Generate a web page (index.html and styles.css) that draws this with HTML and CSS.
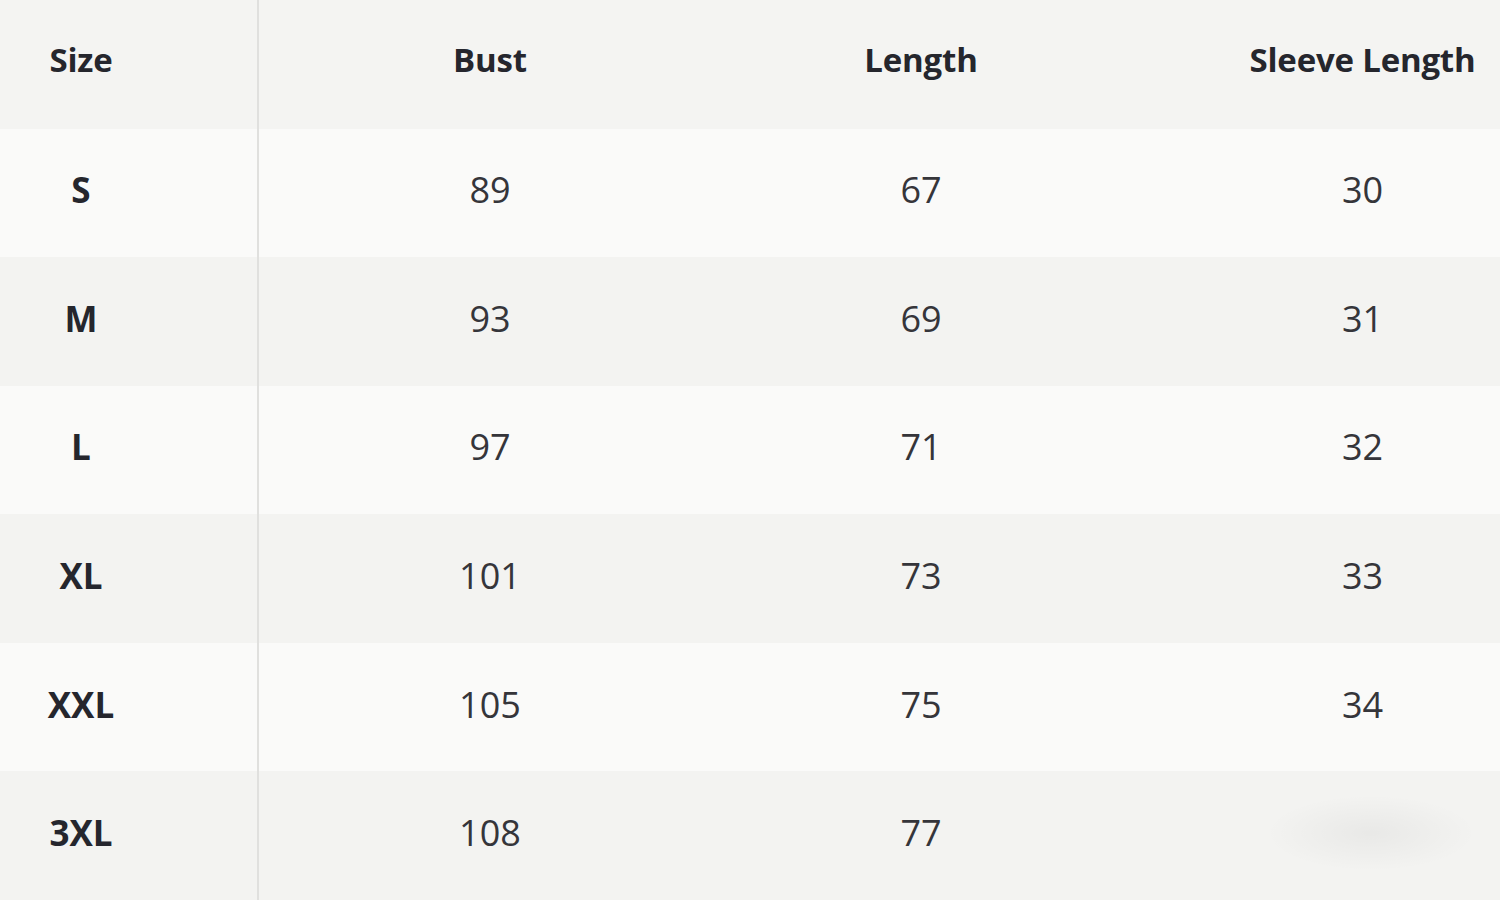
FILE: index.html
```html
<!DOCTYPE html>
<html lang="en">
<head>
<meta charset="utf-8">
<title>Size Chart</title>
<link rel="stylesheet" href="styles.css">
</head>
<body>
<div class="chart">
  <div class="row head">
    <div class="cell size">Size</div>
    <div class="cell">Bust</div>
    <div class="cell">Length</div>
    <div class="cell sleeve">Sleeve Length</div>
  </div>
  <div class="row light">
    <div class="cell size">S</div>
    <div class="cell">89</div>
    <div class="cell">67</div>
    <div class="cell sleeve">30</div>
  </div>
  <div class="row dark">
    <div class="cell size">M</div>
    <div class="cell">93</div>
    <div class="cell">69</div>
    <div class="cell sleeve">31</div>
  </div>
  <div class="row light">
    <div class="cell size">L</div>
    <div class="cell">97</div>
    <div class="cell">71</div>
    <div class="cell sleeve">32</div>
  </div>
  <div class="row dark">
    <div class="cell size">XL</div>
    <div class="cell">101</div>
    <div class="cell">73</div>
    <div class="cell sleeve">33</div>
  </div>
  <div class="row light">
    <div class="cell size">XXL</div>
    <div class="cell">105</div>
    <div class="cell">75</div>
    <div class="cell sleeve">34</div>
  </div>
  <div class="row dark">
    <div class="cell size">3XL</div>
    <div class="cell">108</div>
    <div class="cell">77</div>
    <div class="cell sleeve smudge"></div>
  </div>
</div>
</body>
</html>
```
FILE: styles.css
```css
html, body {
  margin: 0;
  padding: 0;
  background: #fafaf8;
}
body {
  font-family: "Open Sans", "Noto Sans", sans-serif;
  color: #2b2b2e;
}
.chart {
  width: 1500px;
  height: 900px;
  display: grid;
  grid-template-rows: repeat(7, 1fr);
}
.row {
  display: grid;
  grid-template-columns: 259px 462px 400px 379px;
}
.row.head { background: #f4f4f2; }
.row.light { background: #fafaf9; }
.row.dark { background: #f3f3f1; }
.cell {
  display: flex;
  align-items: center;
  justify-content: center;
  font-size: 36px;
  font-weight: 400;
  color: #35353a;
  padding-bottom: 6px;
}
.cell.size {
  border-right: 2px solid #e0e0de;
  padding-right: 95px;
  font-weight: 700;
  font-size: 35px;
  color: #25262d;
}
.head .cell {
  font-weight: 700;
  font-size: 33px;
  color: #25262d;
  letter-spacing: -0.2px;
  padding-bottom: 10px;
}
.cell.sleeve {
  padding-left: 104px;
}
.smudge {
  background: radial-gradient(ellipse 105px 38px at 250px 48%, rgba(0,0,0,0.045), rgba(0,0,0,0));
}
```
